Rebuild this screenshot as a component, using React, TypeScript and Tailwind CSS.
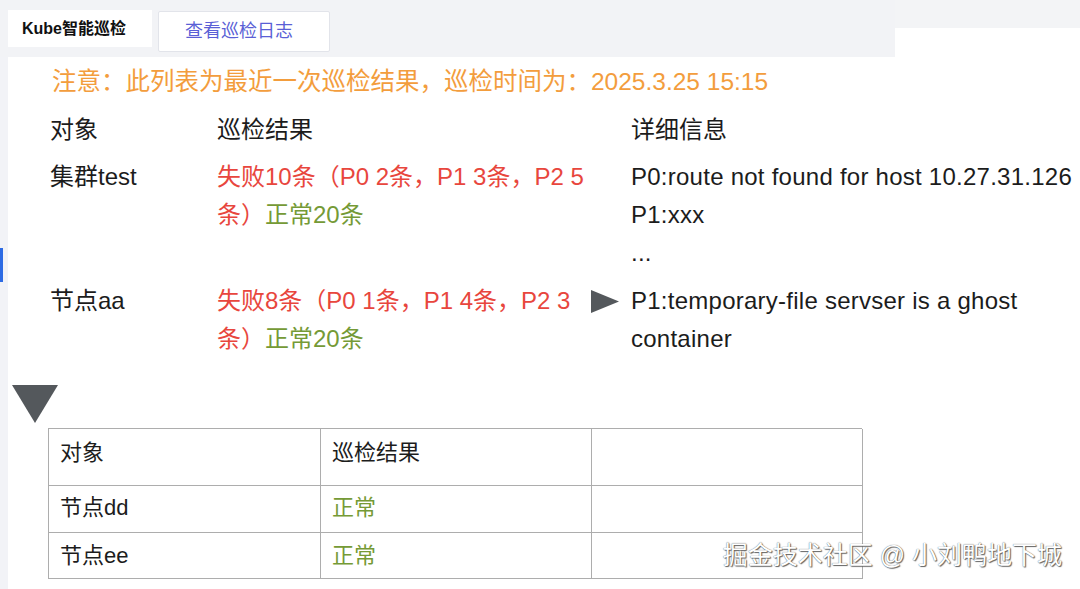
import React from "react"

const font = "font-['Liberation_Sans','Noto_Sans_CJK_SC',sans-serif]"

export default function App() {
  return (
    <div className={`relative w-[1080px] h-[589px] overflow-hidden bg-[#f2f3f6] text-[#1c1c1c] ${font}`}>
      {/* top tab bar */}
      <div className="flex h-[57px]">
        <div className="flex w-[895px] pl-[8px] pt-[10px]">
          <div className="flex h-[37px] w-[144px] items-center bg-white pl-[14px] text-[16px] font-bold text-[#111]">
            Kube智能巡检
          </div>
          <div className="ml-[6px] mt-[1px] flex h-[41px] w-[172px] items-center justify-center rounded-[2px] border border-[#e2e4ea] bg-white pr-[10px] text-[18px] text-[#5a5fd6]">
            查看巡检日志
          </div>
        </div>
        <div className="flex flex-1 flex-col">
          <div className="h-[28px] bg-[#f3f4f6]" />
          <div className="flex-1 bg-white" />
        </div>
      </div>

      <div className="flex h-[532px]">
        <div className="w-[8px] bg-[#f2f3f7]">
          <div className="mt-[191px] h-[34px] w-[3px] bg-[#2d6be4]" />
        </div>

        <div className="flex-1 bg-white pt-[6px] text-[24.5px] leading-[38px]">
          <div className="pl-[44px] text-[#f39d3d]">注意：此列表为最近一次巡检结果，巡检时间为：2025.3.25 15:15</div>

          <div className="mt-[10px] grid grid-cols-[167px_374px_40px_1fr] gap-y-[9px] pl-[42px] text-[24px]">
            <div>对象</div>
            <div>巡检结果</div>
            <div />
            <div>详细信息</div>

            <div>集群test</div>
            <div>
              <div className="text-[#e8463d]">失败10条（P0 2条，P1 3条，P2 5</div>
              <div>
                <span className="text-[#e8463d]">条）</span>
                <span className="text-[#759a36]">正常20条</span>
              </div>
            </div>
            <div />
            <div className="tracking-[0.25px]">
              <div>P0:route not found for host 10.27.31.126</div>
              <div>P1:xxx</div>
              <div>...</div>
            </div>

            <div className="mt-[1px]">节点aa</div>
            <div className="mt-[1px]">
              <div className="text-[#e8463d]">失败8条（P0 1条，P1 4条，P2 3</div>
              <div>
                <span className="text-[#e8463d]">条）</span>
                <span className="text-[#759a36]">正常20条</span>
              </div>
            </div>
            <div className="mt-[1px] flex h-[38px] items-center">
              <svg width="28" height="23" viewBox="0 0 28 23">
                <polygon points="0,0 28,11.5 0,23" fill="#54585c" />
              </svg>
            </div>
            <div className="mt-[1px] tracking-[0.25px]">
              <div>P1:temporary-file servser is a ghost</div>
              <div>container</div>
            </div>
          </div>

          <div className="mt-[27px] pl-[4px]">
            <svg width="46" height="38" viewBox="0 0 46 38" className="block">
              <polygon points="0,0 46,0 23,38" fill="#54585c" />
            </svg>
          </div>

          <div className="ml-[40px] mt-[5px] grid w-[814px] grid-cols-[272px_271px_271px] border-l border-t border-[#adadad] text-[22px]">
            <Cell className="h-[57px] pb-[8px]">对象</Cell>
            <Cell className="h-[57px] pb-[8px]">巡检结果</Cell>
            <Cell className="h-[57px]" />
            <Cell className="h-[47px] pb-[2px]">节点dd</Cell>
            <Cell className="h-[47px] pb-[2px] text-[#759a36]">正常</Cell>
            <Cell className="h-[47px]" />
            <Cell className="h-[46px]">节点ee</Cell>
            <Cell className="h-[46px] text-[#759a36]">正常</Cell>
            <Cell className="h-[46px]" />
          </div>
        </div>
      </div>

      {/* watermark */}
      <div className="absolute right-[18px] top-[539px] text-[25px] leading-[32px] text-white [text-shadow:0_0_1px_#444,1px_1px_1px_#666]">
        掘金技术社区 @ 小刘鸭地下城
      </div>
    </div>
  )
}

function Cell({ className = "", children }: { className?: string; children?: React.ReactNode }) {
  return (
    <div className={`flex items-center border-b border-r border-[#adadad] pl-[11px] ${className}`}>
      {children}
    </div>
  )
}
